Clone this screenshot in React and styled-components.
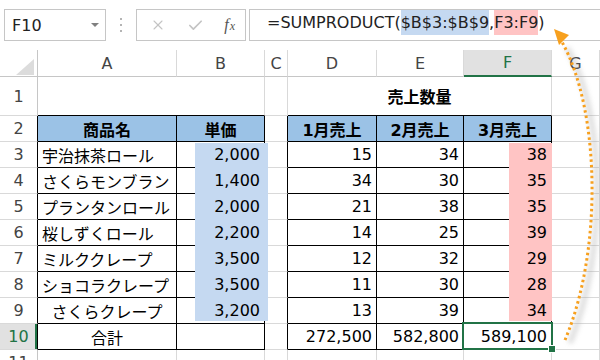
import React from 'react';
import styled, { createGlobalStyle, css } from 'styled-components';
import { X, Check } from 'lucide-react';

const GRID = '#d9d9d9';
const HEAD = '#c6c6c6';
const BLACK = '#000';
const GREEN = '#217346';

const items = [
    ['宇治抹茶ロール', '2,000', 15, 34, 38],
    ['さくらモンブラン', '1,400', 34, 30, 35],
    ['プランタンロール', '2,000', 21, 38, 35],
    ['桜しずくロール', '2,200', 14, 25, 39],
    ['ミルククレープ', '3,500', 12, 32, 29],
    ['ショコラクレープ', '3,500', 11, 30, 28],
    ['さくらクレープ', '3,200', 13, 39, 34, true],
];

const letters = ['A', 'B', 'C', 'D', 'E', 'F', 'G'];

const App = () => {
    return (<Page>
        <GlobalStyle />
        <FormulaBar>
            <NameBox>
                F10
                <Caret />
            </NameBox>
            <Grip>
                <svg width="4" height="14" viewBox="0 0 4 14">
                    <rect x="1" y="0" width="2" height="2" fill="#b4b4b4" />
                    <rect x="1" y="6" width="2" height="2" fill="#b4b4b4" />
                    <rect x="1" y="12" width="2" height="2" fill="#b4b4b4" />
                </svg>
            </Grip>
            <FxBox>
                <X size={16} strokeWidth={1.6} color="#c4c4c4" />
                <Check size={17} strokeWidth={2.4} color="#c4c4c4" />
                <Fx>f<small>x</small></Fx>
            </FxBox>
            <FormulaBox>
                <Token>=SUMPRODUCT(</Token>
                <Token $bg="#c5d9f1">$B$3:$B$9</Token>
                <Token>,</Token>
                <Token $bg="#ffc4c4">F3:F9</Token>
                <Token>)</Token>
            </FormulaBox>
        </FormulaBar>

        <Sheet>
            <Row $h={27}>
                <Cell $r={HEAD} $b={HEAD} $align="flex-end" $valign="flex-end">
                    <Corner />
                </Cell>
                {letters.map(l => (
                    <ColHead key={l} $active={l === 'F'}>{l}</ColHead>
                ))}
            </Row>

            <Row $h={39}>
                <RowNum $r={HEAD}>1</RowNum>
                <Cell $span={2} $r={GRID} $b={BLACK} />
                <Cell $r={GRID} $b={GRID} />
                <Cell $span={3} $r={GRID} $b={BLACK} $align="center">
                    <Text $bold>売上数量</Text>
                </Cell>
                <Cell $r={GRID} $b={GRID} />
            </Row>

            <Row $h={26}>
                <RowNum $r={BLACK}>2</RowNum>
                <Cell $r={BLACK} $b={BLACK} $bg="#9bc2e6" $align="center"><Text $bold>商品名</Text></Cell>
                <Cell $r={BLACK} $b={BLACK} $bg="#9bc2e6" $align="center"><Text $bold>単価</Text></Cell>
                <Cell $r={BLACK} $b={GRID} />
                <Cell $r={BLACK} $b={BLACK} $bg="#9bc2e6" $align="center"><Text $bold>1月売上</Text></Cell>
                <Cell $r={BLACK} $b={BLACK} $bg="#9bc2e6" $align="center"><Text $bold>2月売上</Text></Cell>
                <Cell $r={BLACK} $b={BLACK} $bg="#9bc2e6" $align="center"><Text $bold>3月売上</Text></Cell>
                <Cell $r={GRID} $b={GRID} />
            </Row>

            {items.map(([name, price, m1, m2, m3, centered], i) => (
                <Row $h={26} key={name}>
                    <RowNum $r={BLACK}>{i + 3}</RowNum>
                    <Cell $r={BLACK} $b={BLACK} $align={centered ? 'center' : 'flex-start'}><Text>{name}</Text></Cell>
                    <Cell $r={BLACK} $b={BLACK} $align="flex-end"><Text>{price}</Text></Cell>
                    <Cell $r={BLACK} $b={GRID} />
                    <Cell $r={BLACK} $b={BLACK} $align="flex-end"><Text>{m1}</Text></Cell>
                    <Cell $r={BLACK} $b={BLACK} $align="flex-end"><Text>{m2}</Text></Cell>
                    <Cell $r={BLACK} $b={BLACK} $align="flex-end"><Text>{m3}</Text></Cell>
                    <Cell $r={GRID} $b={GRID} />
                </Row>
            ))}

            <Row $h={26}>
                <RowNum $r={BLACK} $active>10</RowNum>
                <Cell $r={BLACK} $b={BLACK} $align="center"><Text>合計</Text></Cell>
                <Cell $r={BLACK} $b={BLACK} />
                <Cell $r={BLACK} $b={GRID} />
                <Cell $r={BLACK} $b={BLACK} $align="flex-end"><Text>272,500</Text></Cell>
                <Cell $r={BLACK} $b={BLACK} $align="flex-end"><Text>582,800</Text></Cell>
                <Cell $r={BLACK} $b={BLACK} $align="flex-end">
                    <Text>589,100</Text>
                    <Selection><Handle /></Selection>
                </Cell>
                <Cell $r={GRID} $b={GRID} />
            </Row>

            <Row $h={20}>
                <RowNum $r={HEAD} $top>11</RowNum>
                {letters.map(l => <Cell key={l} $r={GRID} $b={GRID} />)}
            </Row>

            <RangeMark $left={195} $width={73} $color="#c5d9f1" />
            <RangeMark $left={509} $width={43} $color="#ffc4c4" />
        </Sheet>

        <Arrow width="600" height="360" viewBox="0 0 600 360">
            <defs>
                <filter id="soft" x="-50%" y="-50%" width="200%" height="200%">
                    <feGaussianBlur stdDeviation="2.5" />
                </filter>
            </defs>
            <path
                d="M570 343 C608 252, 605 112, 567 48"
                fill="none"
                stroke="#9a9a9a"
                strokeWidth="5"
                opacity="0.35"
                filter="url(#soft)"
            />
            <path
                d="M565 340 C603 250, 600 110, 562 42"
                fill="none"
                stroke="#f7a01e"
                strokeWidth="3"
                strokeDasharray="2.5 3"
            />
            <polygon points="554,29 569,35 559,45" fill="#f7a01e" />
        </Arrow>
    </Page>);
}

export default App;

const GlobalStyle = createGlobalStyle`
    body {
        margin: 0;
        background: #fff;
        font-family: "DejaVu Sans", "Noto Sans CJK JP", sans-serif;
    }
`

const Page = styled.div`
    position: relative;
    width: 600px;
    height: 360px;
    overflow: hidden;
    background: #fff;
`

const FormulaBar = styled.div`
    height: 50px;
    box-sizing: border-box;
    padding-top: 9px;
    display: flex;
    align-items: flex-start;
`

const box = css`
    height: 32px;
    box-sizing: border-box;
    border: 1px solid ${HEAD};
    display: flex;
    align-items: center;
`

const NameBox = styled.div`
    ${box}
    margin-left: 4px;
    width: 102px;
    padding: 0 6px 0 7px;
    justify-content: space-between;
    font-size: 16px;
    color: #222;
`

const Caret = styled.span`
    width: 0;
    height: 0;
    border-left: 4px solid transparent;
    border-right: 4px solid transparent;
    border-top: 4px solid #808080;
`

const Grip = styled.div`
    width: 30px;
    height: 32px;
    display: flex;
    align-items: center;
    justify-content: center;
`

const FxBox = styled.div`
    ${box}
    width: 110px;
    padding: 0 10px 0 13px;
    justify-content: space-between;
`

const Fx = styled.span`
    font-family: "Liberation Serif", serif;
    font-style: italic;
    font-size: 16px;
    color: #555;
    small {
        font-size: 12px;
        margin-left: 1px;
    }
`

const FormulaBox = styled.div`
    ${box}
    margin-left: 3px;
    flex: 1;
    border-right: none;
    align-items: flex-start;
    padding-left: 17px;
    font-size: 16px;
    color: #222;
    white-space: nowrap;
`

const Token = styled.span`
    display: inline-block;
    height: 25px;
    line-height: 25px;
    background: ${p => p.$bg || 'transparent'};
`

const Sheet = styled.div`
    position: relative;
`

const Row = styled.div`
    display: grid;
    grid-template-columns: 38px 139px 88px 23px 89px 87px 88px 1fr;
    height: ${p => p.$h}px;
`

const Cell = styled.div`
    box-sizing: border-box;
    position: relative;
    grid-column: span ${p => p.$span || 1};
    border-right: 1px solid ${p => p.$r || GRID};
    border-bottom: 1px solid ${p => p.$b || GRID};
    background: ${p => p.$bg || 'transparent'};
    display: flex;
    align-items: ${p => p.$valign || 'center'};
    justify-content: ${p => p.$align || 'flex-start'};
    padding: 0 4px;
    font-size: 16px;
    color: #000;
    white-space: nowrap;
`

const Text = styled.span`
    position: relative;
    z-index: 2;
    font-weight: ${p => (p.$bold ? 700 : 400)};
`

const Corner = styled.span`
    width: 18px;
    height: 16px;
    margin: 0 -1px 1px 0;
    background: #dcdcdc;
    clip-path: polygon(100% 0, 100% 100%, 0 100%);
`

const ColHead = styled.div`
    box-sizing: border-box;
    border-right: 1px solid ${GRID};
    border-bottom: ${p => (p.$active ? `2px solid ${GREEN}` : `1px solid ${HEAD}`)};
    background: ${p => (p.$active ? '#e1e1e1' : '#fff')};
    color: ${p => (p.$active ? GREEN : '#444')};
    display: flex;
    align-items: center;
    justify-content: center;
    font-size: 16px;
`

const RowNum = styled.div`
    box-sizing: border-box;
    border-right: 1px solid ${p => p.$r};
    border-bottom: 1px solid ${GRID};
    background: ${p => (p.$active ? '#e1e1e1' : '#fff')};
    color: ${p => (p.$active ? GREEN : '#444')};
    box-shadow: ${p => (p.$active ? `inset -2px 0 0 ${GREEN}` : 'none')};
    display: flex;
    align-items: ${p => (p.$top ? 'flex-start' : 'center')};
    padding-top: ${p => (p.$top ? '3px' : '0')};
    justify-content: center;
    font-size: 16px;
`

const Selection = styled.div`
    position: absolute;
    top: -2px;
    left: -2px;
    right: -2px;
    bottom: -1px;
    border: 2px solid ${GREEN};
    z-index: 3;
`

const Handle = styled.span`
    position: absolute;
    right: -5px;
    bottom: -5px;
    width: 6px;
    height: 6px;
    background: ${GREEN};
    border: 1px solid #fff;
`

const RangeMark = styled.div`
    position: absolute;
    top: 93px;
    left: ${p => p.$left}px;
    width: ${p => p.$width}px;
    height: 178px;
    background: ${p => p.$color};
    z-index: 1;
`

const Arrow = styled.svg`
    position: absolute;
    top: 0;
    left: 0;
    pointer-events: none;
    z-index: 5;
`
